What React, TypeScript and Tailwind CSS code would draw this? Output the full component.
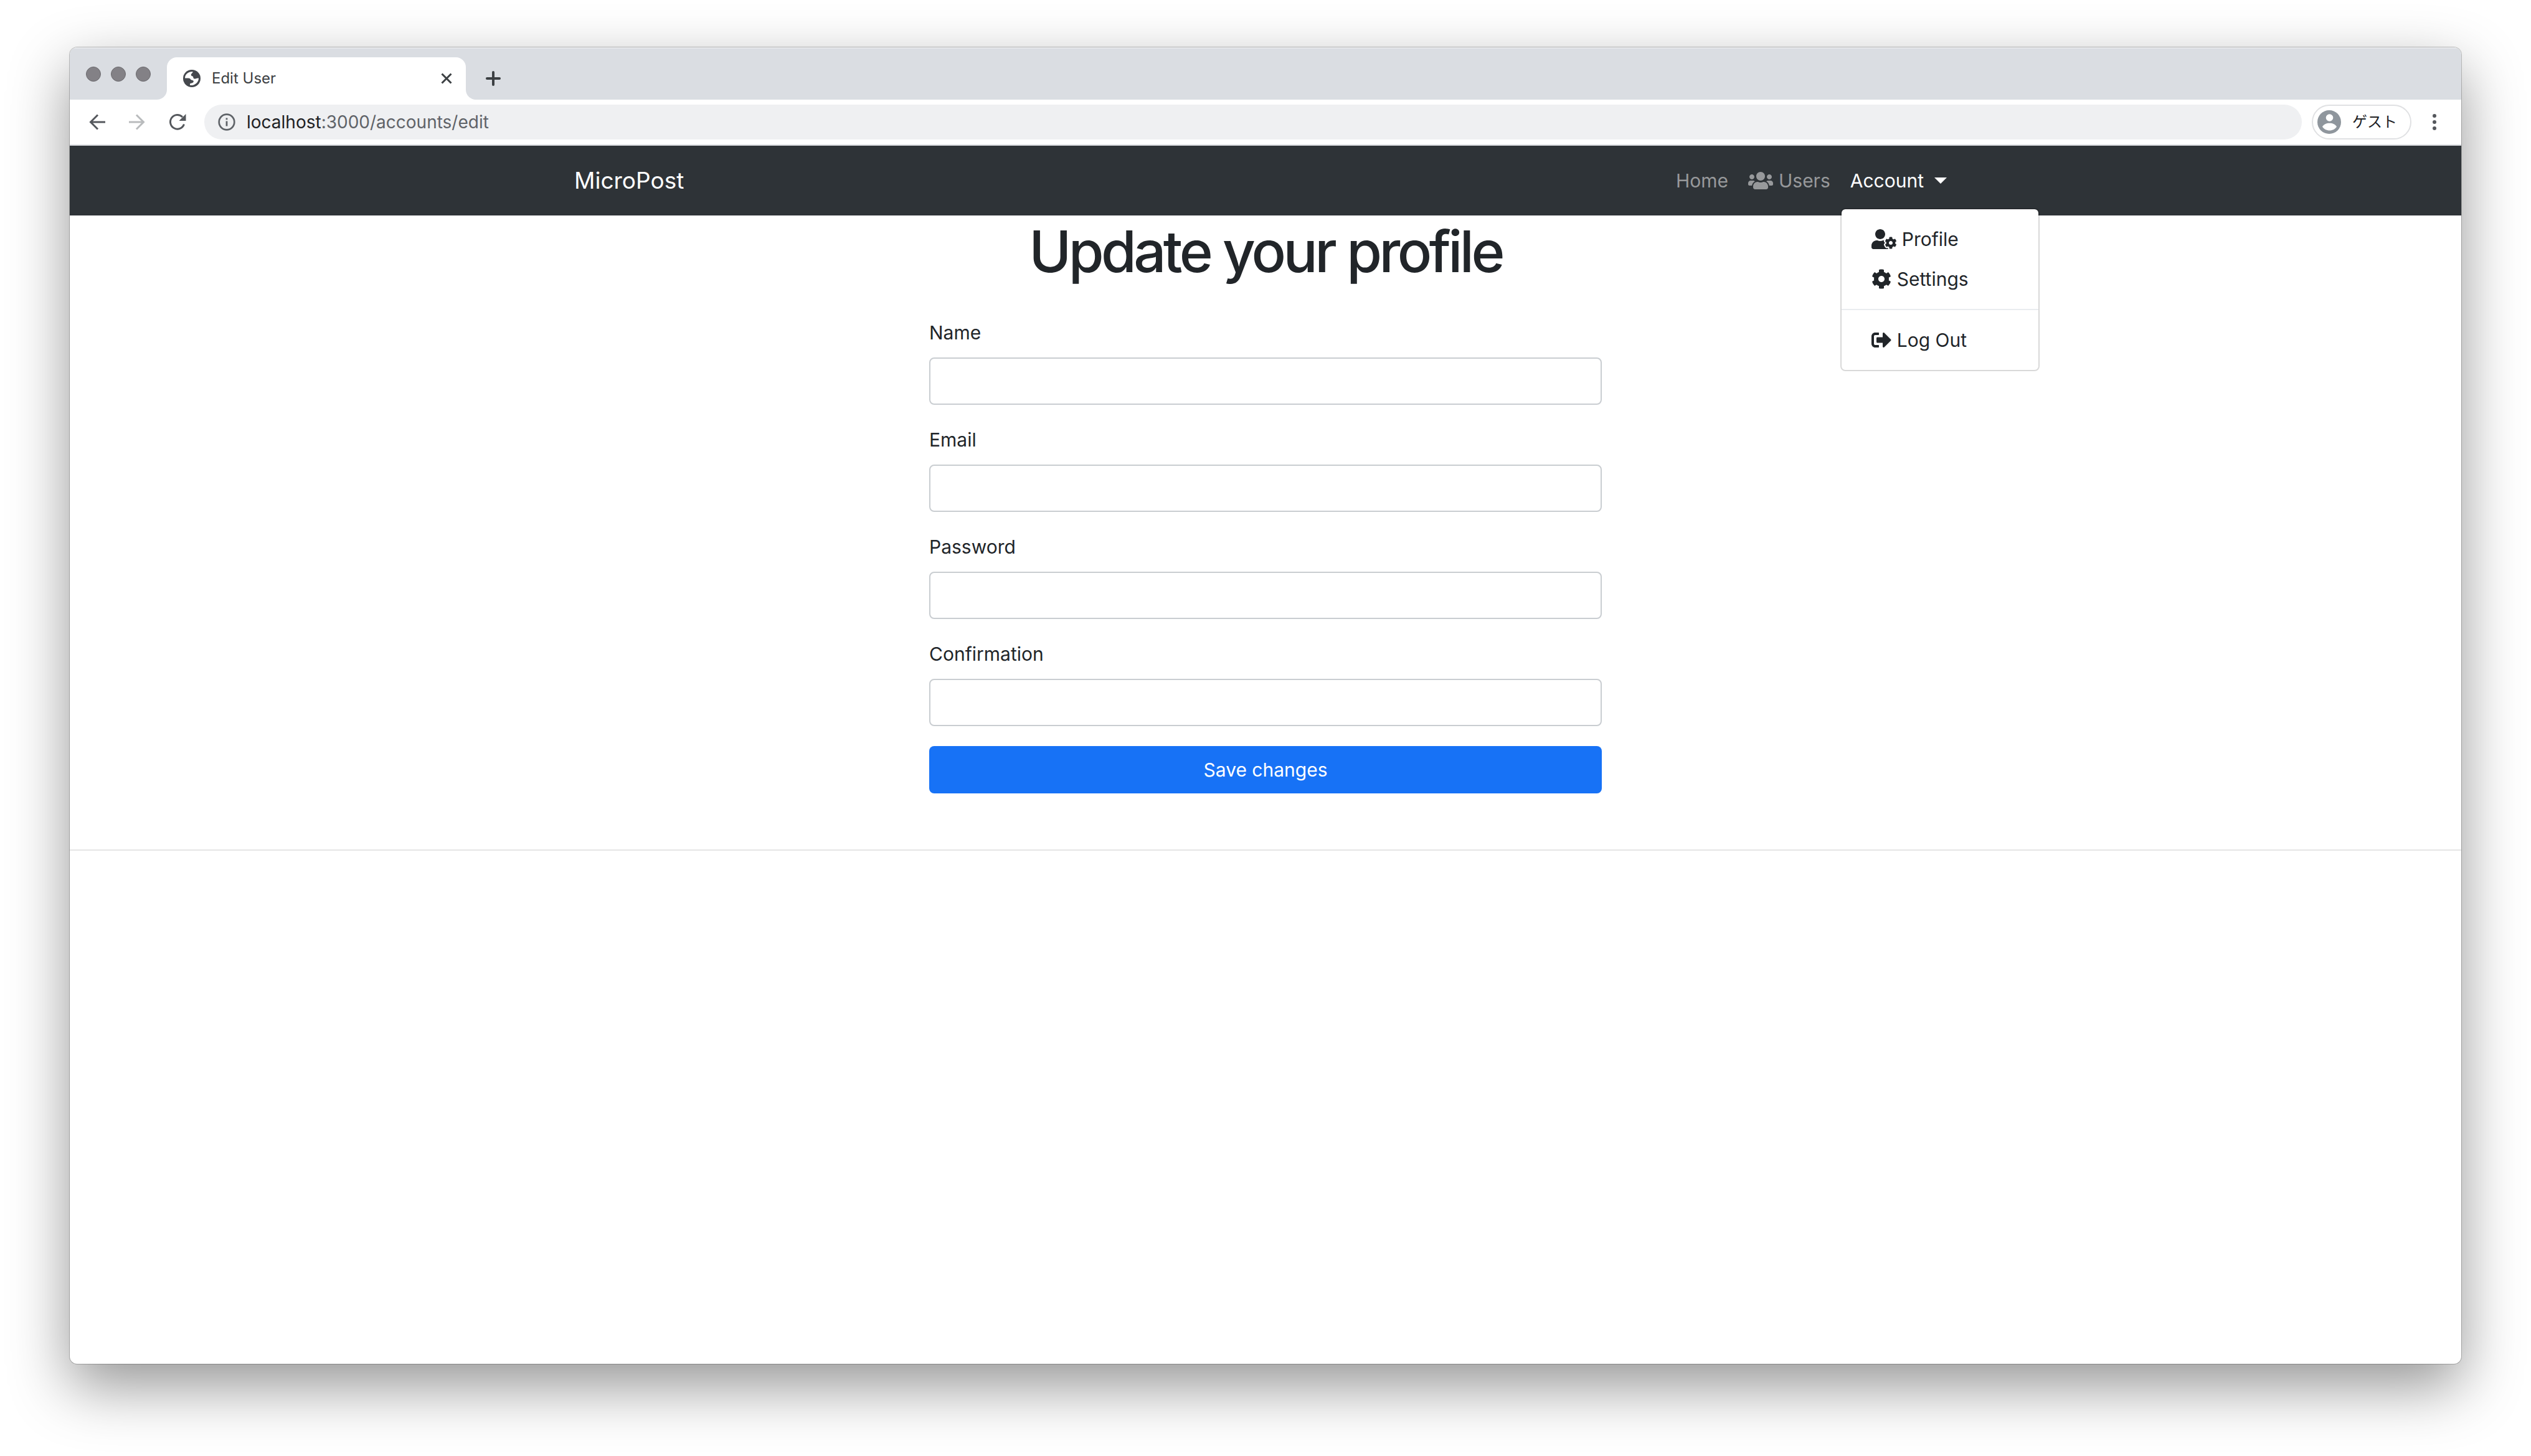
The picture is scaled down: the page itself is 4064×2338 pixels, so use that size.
import type { ReactNode } from "react";
import { FaCog, FaSignOutAlt, FaUserCog, FaUsers } from "react-icons/fa";

function GlobeIcon() {
  return (
    <svg viewBox="0 0 28 28" className="size-7 shrink-0" aria-hidden="true">
      <circle cx="14" cy="14" r="14" fill="#45484d" />
      <path
        fill="#fff"
        d="M3 13.500C3 7.500 8 3 15.500 3c.4 1.800-2 2.600-2.700 4.500-.5 1.500.9 2.900 2.700 3 1.200 1.200.5 3.500 2.500 4 2.200.5 4-1.600 7-1 0 5.500-4.300 10.500-10.500 11.500l-3.500-.2V22.500c2-1.500 5.800-.8 5.800-3.700 0-2.800-4.300-1.500-5.300-4-.6-1.600-3.500-1.300-8.500-1.300z"
      />
    </svg>
  );
}

function CloseIcon() {
  return (
    <svg viewBox="0 0 18 18" className="size-[18px]" fill="none" stroke="currentColor" strokeWidth="3" aria-hidden="true">
      <path d="M1.500 1.500l15 15M16.500 1.500l-15 15" />
    </svg>
  );
}

function PlusIcon() {
  return (
    <svg viewBox="0 0 24 24" className="size-6" fill="none" stroke="currentColor" strokeWidth="4" strokeLinecap="round" aria-hidden="true">
      <path d="M12 2v20M2 12h20" />
    </svg>
  );
}

function ArrowIcon({ forward = false }: { forward?: boolean }) {
  return (
    <svg viewBox="0 0 26 26" className="size-[26px]" fill="none" stroke="currentColor" strokeWidth="3" aria-hidden="true">
      <path d={forward ? "M0 13h23.500M12 1.500L23.500 13 12 24.500" : "M26 13H2.500M14 1.500L2.500 13 14 24.500"} />
    </svg>
  );
}

function ReloadIcon() {
  return (
    <svg viewBox="0 0 28 28" className="size-7" aria-hidden="true">
      <path d="M24.500 17.500A11.300 11.300 0 1 1 22 6" fill="none" stroke="currentColor" strokeWidth="3" />
      <path d="M27.500 1v11h-11z" fill="currentColor" />
    </svg>
  );
}

function InfoIcon() {
  return (
    <svg viewBox="0 0 28 28" className="size-7 shrink-0 text-[#5f6368]" aria-hidden="true">
      <circle cx="14" cy="14" r="12.300" fill="none" stroke="currentColor" strokeWidth="2.700" />
      <path d="M12.600 12.500h2.800v8h-2.800zM12.600 7.500h2.800v2.800h-2.800z" fill="currentColor" />
    </svg>
  );
}

function AvatarIcon() {
  return (
    <svg viewBox="0 0 38 38" className="size-[38px] shrink-0" aria-hidden="true">
      <circle cx="19" cy="19" r="19" fill="#8f969d" />
      <circle cx="19.500" cy="12" r="5.800" fill="#fff" />
      <path d="M8 26.500c2-3.700 6.500-5.700 11.500-5.700s9.500 2 11.500 5.700c-2.400 3.700-6.500 6-11.500 6S10.400 30.200 8 26.500z" fill="#fff" />
    </svg>
  );
}

function KebabIcon() {
  return (
    <svg viewBox="0 0 6 26" className="h-[26px] w-1.5" fill="currentColor" aria-hidden="true">
      <circle cx="3" cy="3" r="3" />
      <circle cx="3" cy="13" r="3" />
      <circle cx="3" cy="23" r="3" />
    </svg>
  );
}

function TabStrip() {
  return (
    <div className="flex h-[84px] bg-[#dadde2] shadow-[inset_0_2px_0_#e6e8eb]">
      <div className="flex w-[140px] items-center gap-4 pt-0.5 pl-[26px]">
        {["Close window", "Minimize window", "Zoom window"].map((label) => (
          <button
            key={label}
            type="button"
            aria-label={label}
            className="size-6 rounded-full border border-[#6b6a6e] bg-[#838186]"
          />
        ))}
      </div>
      <span className="size-4 self-end bg-white">
        <span className="block size-4 rounded-br-full bg-[#dadde2]" />
      </span>
      <div className="mt-4 flex w-[480px] items-center gap-[18px] rounded-t-2xl bg-white pr-[22px] pl-[26px]">
        <GlobeIcon />
        <span className="flex-1 truncate text-2xl text-[#3c4043]">Edit User</span>
        <button type="button" aria-label="Close tab" className="text-[#3c4043]">
          <CloseIcon />
        </button>
      </div>
      <span className="size-4 self-end bg-white">
        <span className="block size-4 rounded-bl-full bg-[#dadde2]" />
      </span>
      <button type="button" aria-label="New tab" className="mt-4 px-4 text-[#3c4043]">
        <PlusIcon />
      </button>
    </div>
  );
}

function Toolbar() {
  return (
    <div className="flex h-[74px] items-center border-b-2 border-[#d8dade] bg-white pr-10 pl-[31px] text-[#55585d]">
      <div className="flex w-[185px] items-center gap-[38px]">
        <button type="button" aria-label="Back">
          <ArrowIcon />
        </button>
        <button type="button" aria-label="Forward" className="text-[#b9bbbd]">
          <ArrowIcon forward />
        </button>
        <button type="button" aria-label="Reload">
          <ReloadIcon />
        </button>
      </div>
      <div className="flex h-14 flex-1 items-center gap-[18px] rounded-full bg-[#eff0f2] px-[22px]">
        <InfoIcon />
        <span className="text-[28px] text-[#5f6368]">
          <span className="text-[#202124]">localhost</span>:3000/accounts/edit
        </span>
      </div>
      <button
        type="button"
        className="ml-4 flex h-14 w-40 items-center gap-[18px] rounded-full border-2 border-[#e0e1e3] pl-[7px] text-2xl text-[#202124]"
      >
        <AvatarIcon />
        ゲスト
      </button>
      <button type="button" aria-label="Menu" className="ml-[34px]">
        <KebabIcon />
      </button>
    </div>
  );
}

function MenuItem({ icon, label }: { icon: ReactNode; label: string }) {
  return (
    <a href="#" role="menuitem" className="flex h-16 items-center gap-[9px] px-12">
      {icon}
      {label}
    </a>
  );
}

function Navbar() {
  return (
    <header className="bg-[#2e3337] text-white">
      <div className="mx-auto flex h-28 max-w-[2280px] items-center justify-between px-[30px]">
        <a href="#" className="text-[37px]">
          MicroPost
        </a>
        <nav>
          <ul className="flex items-center text-[30px] leading-[48px] text-[#97999b]">
            <li>
              <a href="#" className="block px-4">
                Home
              </a>
            </li>
            <li>
              <a href="#" className="flex items-center gap-[9px] px-4">
                <FaUsers className="h-8 w-10" />
                Users
              </a>
            </li>
            <li className="relative text-white">
              <button type="button" aria-haspopup="menu" aria-expanded="true" className="flex items-center gap-[17px] px-4">
                Account
                <svg viewBox="0 0 20 10" className="h-2.5 w-5" fill="currentColor" aria-hidden="true">
                  <path d="M0 0h20L10 10z" />
                </svg>
              </button>
              <div
                role="menu"
                className="absolute top-full left-0 mt-5 w-80 rounded-lg border-2 border-black/15 bg-white bg-clip-padding py-4 text-[#212529]"
              >
                <MenuItem icon={<FaUserCog className="h-8 w-10" />} label="Profile" />
                <MenuItem icon={<FaCog className="size-8" />} label="Settings" />
                <hr className="my-4 border-t-2 border-[#e9ecef]" />
                <MenuItem icon={<FaSignOutAlt className="size-8" />} label="Log Out" />
              </div>
            </li>
          </ul>
        </nav>
      </div>
    </header>
  );
}

const fields = [
  { id: "name", label: "Name", type: "text" },
  { id: "email", label: "Email", type: "email" },
  { id: "password", label: "Password", type: "password" },
  { id: "confirmation", label: "Confirmation", type: "password" },
];

function ProfileForm() {
  return (
    <main className="border-b-2 border-[#e5e5e5] pb-[90px]">
      <h1 className="text-center text-[92px] leading-[116px] font-medium tracking-tighter">Update your profile</h1>
      <form className="mx-auto mt-12 flex max-w-[1080px] flex-col gap-8 text-[30px]">
        {fields.map((field) => (
          <div key={field.id} className="flex flex-col gap-4">
            <label htmlFor={field.id} className="leading-[48px]">
              {field.label}
            </label>
            <input
              id={field.id}
              type={field.type}
              className="h-[76px] w-full rounded-lg border-2 border-[#c9cdd1] bg-white px-6"
            />
          </div>
        ))}
        <button type="submit" className="h-[76px] rounded-lg bg-[#1772f6] text-white">
          Save changes
        </button>
      </form>
    </main>
  );
}

export default function App() {
  return (
    <div className="flex min-h-screen flex-col bg-white px-28 pt-19 pb-37 font-['Inter','Noto_Sans_CJK_JP',sans-serif] text-[#212529]">
      <div className="flex flex-1 flex-col overflow-hidden rounded-xl bg-white shadow-[0_0_0_1px_rgba(0,0,0,0.22),0_36px_96px_rgba(0,0,0,0.42)]">
        <TabStrip />
        <Toolbar />
        <Navbar />
        <ProfileForm />
      </div>
    </div>
  );
}
